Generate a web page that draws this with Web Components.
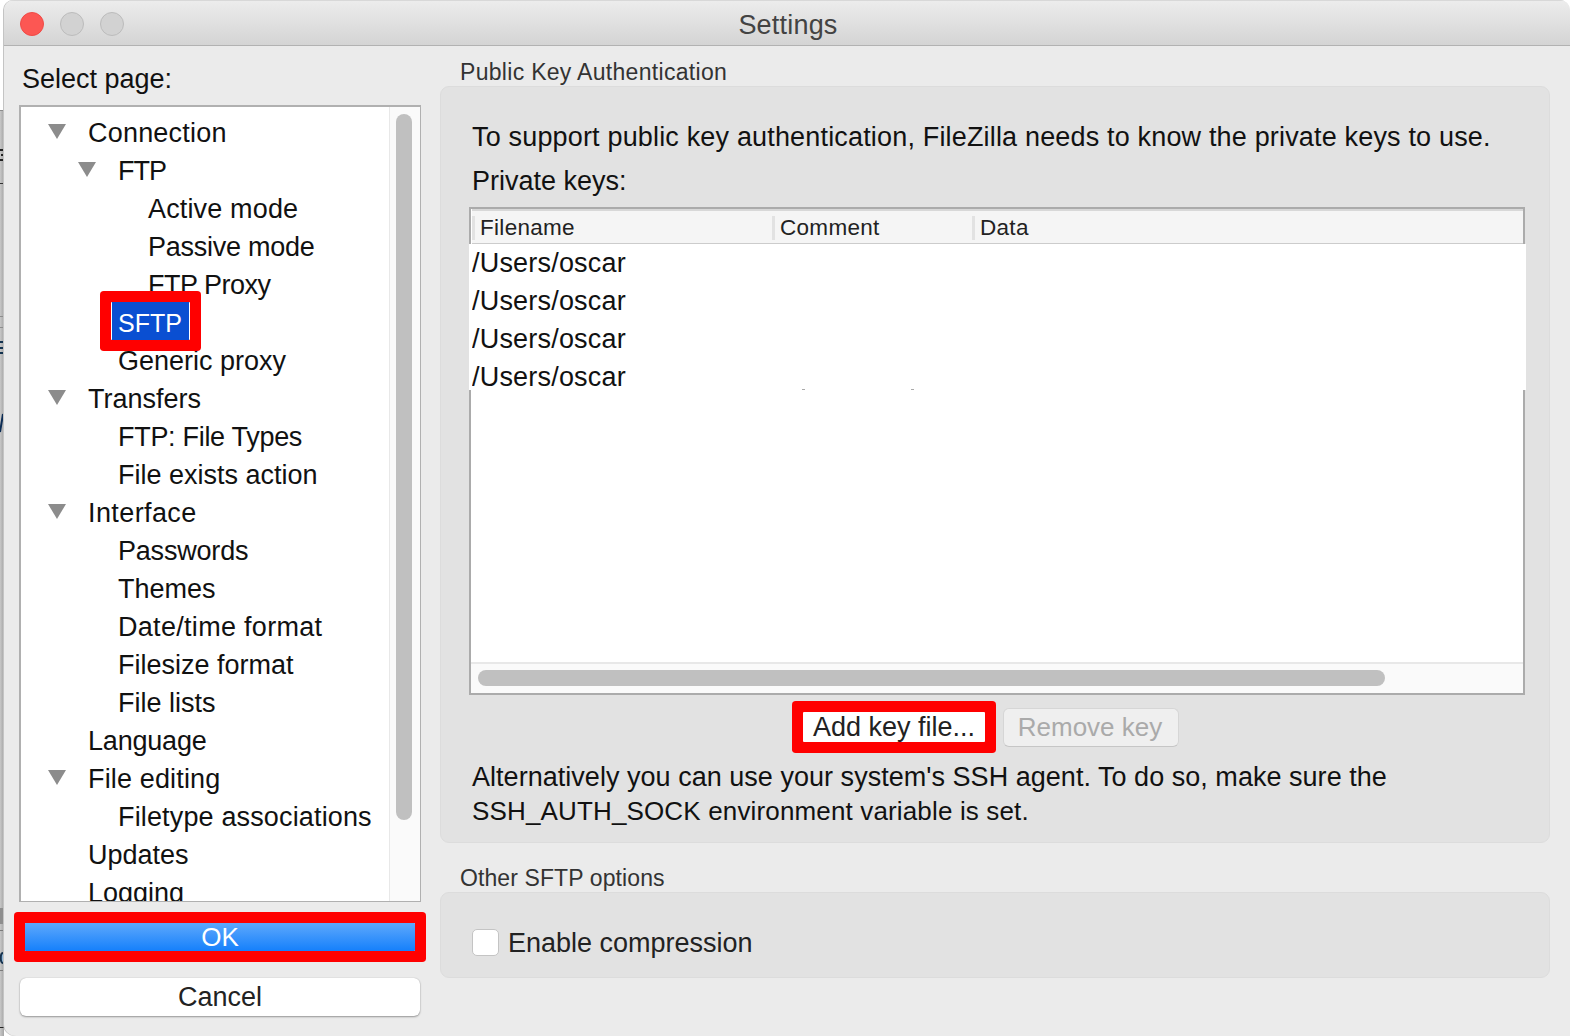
<!DOCTYPE html>
<html><head><meta charset="utf-8"><title>Settings</title>
<style>
html,body{margin:0;padding:0;background:#fff;height:1036px;overflow:hidden}
body{font-family:"Liberation Sans",Arial,sans-serif;font-size:27px;color:#111;position:relative}
span.l2{font-size:26px;letter-spacing:.15px}
</style></head><body>
<fz-backdrop></fz-backdrop>
<fz-window title="Settings">
  <fz-sidebar slot="left">
    <fz-tree>
      <fz-row level="0" open ls=".2">Connection</fz-row>
      <fz-row level="1" open ls="-1">FTP</fz-row>
      <fz-row level="2" ls=".15">Active mode</fz-row>
      <fz-row level="2" ls="-.25">Passive mode</fz-row>
      <fz-row level="2" ls="-.5">FTP Proxy</fz-row>
      <fz-row level="1" selected>SFTP</fz-row>
      <fz-row level="1">Generic proxy</fz-row>
      <fz-row level="0" open>Transfers</fz-row>
      <fz-row level="1" ls="-.3">FTP: File Types</fz-row>
      <fz-row level="1">File exists action</fz-row>
      <fz-row level="0" open ls=".4">Interface</fz-row>
      <fz-row level="1" ls="-.2">Passwords</fz-row>
      <fz-row level="1">Themes</fz-row>
      <fz-row level="1" ls=".3">Date/time format</fz-row>
      <fz-row level="1">Filesize format</fz-row>
      <fz-row level="1">File lists</fz-row>
      <fz-row level="0" ls="-.2">Language</fz-row>
      <fz-row level="0" open ls=".15">File editing</fz-row>
      <fz-row level="1" ls=".15">Filetype associations</fz-row>
      <fz-row level="0">Updates</fz-row>
      <fz-row level="0">Logging</fz-row>
    </fz-tree>
  </fz-sidebar>
  <fz-content slot="right">
    <fz-group label="Public Key Authentication" kind="keys">
      <p class="a">To support public key authentication, FileZilla needs to know the private keys to use.</p>
      <p class="b">Private keys:</p>
      <fz-keylist></fz-keylist>
      <fz-keybuttons></fz-keybuttons>
      <p class="c">Alternatively you can use your system's SSH agent. To do so, make sure the<br><span class="l2">SSH_AUTH_SOCK environment variable is set.</span></p>
    </fz-group>
    <fz-group label="Other SFTP options" kind="other">
      <fz-check>Enable compression</fz-check>
    </fz-group>
  </fz-content>
</fz-window>
<script>
function shadow(el, html){ el.attachShadow({mode:'open'}).innerHTML = html; }
const FONT = '"Liberation Sans",Arial,sans-serif';

customElements.define('fz-backdrop', class extends HTMLElement{
  connectedCallback(){
    shadow(this, `<style>
      :host{position:absolute;left:0;top:0;width:4px;height:1036px;display:block}
      svg{display:block}
    </style>
    <svg width="4" height="1036" viewBox="0 0 4 1036">
      <defs><linearGradient id="g" x1="0" x2="1" y1="0" y2="0"><stop offset="0" stop-color="#c8c8c8"/><stop offset="1" stop-color="#a4a4a4"/></linearGradient></defs>
      <rect y="110" width="4" height="926" fill="url(#g)"/>
      <rect y="110" width="4" height="1" fill="#8c8c8c"/>
      <rect y="183" width="4" height="1" fill="#333"/>
      <rect y="316" width="4" height="1" fill="#8c8c8c"/>
      <rect y="327" width="4" height="1" fill="#8c8c8c"/>
      <path d="M0 150h3M1 155h3M0 160h3" stroke="#222" stroke-width="2" fill="none"/>
      <path d="M0 342h3M0 348h3M0 353h3" stroke="#12324f" stroke-width="2" fill="none"/>
      <path d="M3 414L0 432" stroke="#0c2c55" stroke-width="2" fill="none"/>
      <rect y="908" width="4" height="16" fill="#8e8e8e"/>
      <rect y="930" width="4" height="1" fill="#7a7a7a"/>
      <path d="M3 953c-3 0-3 10 0 10" stroke="#16324e" stroke-width="2" fill="#8fb6d6"/>
      <rect y="970" width="4" height="1" fill="#7a7a7a"/>
      <rect y="1027" width="6" height="1" fill="#222"/>
    </svg>`);
  }
});

customElements.define('fz-window', class extends HTMLElement{
  connectedCallback(){
    shadow(this, `<style>
      :host{display:flex;flex-direction:column;box-sizing:border-box;width:1566px;height:1036px;margin-left:4px;background:#ebebeb;border-radius:10px 10px 0 12px;overflow:hidden;position:relative;box-shadow:-1px 0 0 #c4c4c4}
      .bar{flex:none;height:46px;box-sizing:border-box;display:flex;align-items:center;gap:16px;padding:1px 0 0 16px;position:relative;background:linear-gradient(#ececec,#d4d4d4);border-bottom:1px solid #b2b2b2;border-top:1px solid #d8d8d8}
      .l{width:24px;height:24px;border-radius:50%;box-sizing:border-box;background:#d2d2d2;border:1px solid #bcbcbc}
      .l.r{background:#fc5753;border-color:#f04a46}
      .t{position:absolute;left:2px;right:0;text-align:center;font-size:27px;line-height:32px;color:#434343;top:8px;letter-spacing:.2px}
      .body{flex:1;display:flex;padding:0 20px 0 16px;gap:20px;min-height:0}
    </style>
    <div class="bar"><span class="l r"></span><span class="l"></span><span class="l"></span><span class="t">${this.getAttribute('title')}</span></div>
    <div class="body"><slot name="left"></slot><slot name="right"></slot></div>`);
  }
});

customElements.define('fz-sidebar', class extends HTMLElement{
  connectedCallback(){
    shadow(this, `<style>
      :host{display:flex;flex-direction:column;width:400px;flex:none}
      .h{height:59px;box-sizing:border-box;padding:18px 0 0 2px;font-size:27px;line-height:30px;color:#111}
      .btns{display:flex;flex-direction:column;align-items:center}
      .ok{margin-top:21px;width:390px;height:28px;background:linear-gradient(#5ea8fc,#1580fb);color:#fff;text-align:center;line-height:28px;font-size:26px;box-shadow:0 0 0 11px #f00;border-radius:1px}
      .cancel{margin-top:27px;width:400px;height:38px;box-sizing:border-box;background:#fff;border-radius:6px;text-align:center;line-height:38px;font-size:27px;color:#222;box-shadow:0 1px 2px rgba(0,0,0,.35),0 0 1px rgba(0,0,0,.25)}
    </style>
    <div class="h">Select page:</div>
    <slot></slot>
    <div class="btns"><div class="ok">OK</div><div class="cancel">Cancel</div></div>`);
  }
});

customElements.define('fz-tree', class extends HTMLElement{
  connectedCallback(){
    shadow(this, `<style>
      :host{display:flex;width:402px;height:797px;box-sizing:border-box;border:1px solid #b0b0b0;border-top-width:2px;border-left-width:2px;background:#fff;overflow:hidden;margin:0 0 0 -1px}
      .list{flex:1;min-width:0;padding-top:7px;overflow:hidden}
      .sb{flex:none;width:31px;box-sizing:border-box;background:#fafafa;border-left:1px solid #e8e8e8;padding:7px 7px 0 6px}
      .th{height:706px;width:16px;background:#c0c0c0;border-radius:8px}
    </style>
    <div class="list"><slot></slot></div><div class="sb"><div class="th"></div></div>`);
  }
});

customElements.define('fz-row', class extends HTMLElement{
  connectedCallback(){
    const lv = +this.getAttribute('level');
    const sel = this.hasAttribute('selected');
    const ls = this.getAttribute('ls') || '0';
    shadow(this, `<style>
      :host{display:flex;align-items:center;height:38px;font-size:27px;color:#111;white-space:nowrap;padding-left:${27+lv*30}px;position:relative;letter-spacing:${ls}px;${sel?'z-index:1;':''}}
      .tw{flex:none;width:18px;height:15px;margin:-3px 22px 0 0;${this.hasAttribute('open')?'':'visibility:hidden;'}}
      .label{display:inline-block;line-height:38px}
      .label.sel{background:#0a4fd2;color:#fff;font-size:25px;line-height:34px;padding:4px 7px 0 6px;margin:0 0 4px -7px;border-left:1px solid #fff;border-right:1px solid #fff;box-shadow:0 0 0 11px #f00;border-radius:1px}
    </style>
    <svg class="tw" viewBox="0 0 18 15"><path d="M0 0H18L9 15Z" fill="#8c8c8c"/></svg><span class="label ${sel?'sel':''}"><slot></slot></span>`);
  }
});

customElements.define('fz-content', class extends HTMLElement{
  connectedCallback(){
    shadow(this, `<style>:host{display:flex;flex-direction:column;flex:1;min-width:0;padding-top:12px;gap:21px}</style><slot></slot>`);
  }
});

customElements.define('fz-group', class extends HTMLElement{
  connectedCallback(){
    const k = this.getAttribute('kind');
    shadow(this, `<style>
      :host{display:block;font-family:${FONT}}
      .cap{font-size:23px;height:28px;line-height:28px;color:#333;padding-left:20px;letter-spacing:${k==='keys'?.3:.1}px}
      .box{box-sizing:border-box;background:#e2e2e2;border:1px solid #dcdcdc;border-radius:9px;padding:0 24px 0 31px;height:${k==='keys'?757:86}px;${k==='other'?'display:flex;align-items:center;padding-top:15px;':''}}
      ::slotted(p){margin:0;font-size:27px;color:#111}
      ::slotted(p.a){padding-top:34px;line-height:32px;letter-spacing:.17px;white-space:nowrap}
      ::slotted(p.b){padding-top:12px;line-height:32px}
      ::slotted(p.c){line-height:34px;margin-top:7px;white-space:nowrap;letter-spacing:.03px}
    </style><div class="cap">${this.getAttribute('label')}</div><div class="box"><slot></slot></div>`);
  }
});

customElements.define('fz-keylist', class extends HTMLElement{
  connectedCallback(){
    const rows = Array(4).fill('<div class="r"><span>/Users/oscar</span></div>').join('');
    shadow(this, `<style>
      :host{display:flex;flex-direction:column;box-sizing:border-box;width:1056px;height:488px;margin:10px 0 0 -3px;border:2px solid #ababab;background:#fff;position:relative}
      .hd{flex:none;display:grid;grid-template-columns:300px 200px 1fr;height:36px;box-sizing:border-box;background:#f5f5f5;border-top:2px solid #d8d8d8;border-bottom:2px solid #ccc;margin:0 0 0 1px;font-size:22.5px;color:#222;letter-spacing:.3px}
      .hd div{border-left:3px solid #e2e2e2;padding-left:5px;height:24px;line-height:24px;margin-top:5px}
      .rows{flex:none;height:146px;box-sizing:border-box;margin:-1px -3px 0 -2px;background:#fff;position:relative}
      .r{height:38px;line-height:38px;font-size:27px;color:#111;padding-left:3px;white-space:nowrap;letter-spacing:.2px}
      .r span{display:inline-block;width:154px;overflow:hidden;vertical-align:top}
      .dots{position:absolute;top:145px;left:333px;width:3px;height:1px;background:#aaa;box-shadow:109px 0 0 #aaa}
      .sp{flex:1}
      .hs{flex:none;height:31px;box-sizing:border-box;background:#fafafa;border-top:2px solid #e8e8e8;padding:6px 0 0 7px}
      .th{height:16px;width:907px;background:#c0c0c0;border-radius:8px}
    </style>
    <div class="hd"><div>Filename</div><div>Comment</div><div>Data</div></div>
    <div class="rows">${rows}<div class="dots"></div></div>
    <div class="sp"></div>
    <div class="hs"><div class="th"></div></div>`);
  }
});

customElements.define('fz-keybuttons', class extends HTMLElement{
  connectedCallback(){
    shadow(this, `<style>
      :host{display:flex;align-items:center;height:52px;margin-top:6px;padding-left:331px;font-size:27px}
      .add{width:182px;height:30px;line-height:30px;background:#fff;color:#222;text-align:center;box-shadow:0 0 0 11px #f00;border-radius:1px;white-space:nowrap}
      .rm{margin-left:18px;width:176px;height:39px;font-size:26px;line-height:37px;box-sizing:border-box;background:#efefef;border:1px solid #d6d6d6;border-bottom-color:#c6c6c6;border-radius:6px;color:#aaa;text-align:center;white-space:nowrap;padding-right:2px}
    </style><div class="add">Add key file...</div><div class="rm">Remove key</div>`);
  }
});

customElements.define('fz-check', class extends HTMLElement{
  connectedCallback(){
    shadow(this, `<style>
      :host{display:flex;align-items:center;gap:9px;font-size:27px;color:#222}
      .c{width:27px;height:27px;box-sizing:border-box;background:#fff;border:1px solid #c4c4c4;border-radius:5px}
      .t{padding-top:2px}
    </style><span class="c"></span><span class="t"><slot></slot></span>`);
  }
});
</script>
</body></html>
